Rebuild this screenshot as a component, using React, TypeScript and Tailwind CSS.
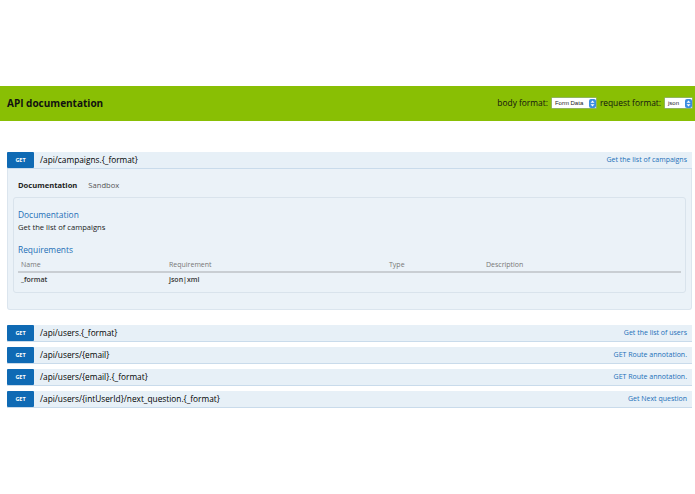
import React from "react";

const font = { fontFamily: '"Open Sans", "Noto Sans", sans-serif' };

function Stepper() {
  return (
    <span className="flex h-[9px] w-[7px] flex-col items-center justify-center rounded-[2px] bg-[#3b8de0]">
      <svg width="5" height="7" viewBox="0 0 5 7">
        <path d="M2.5 0.5 L4.5 2.8 H0.5 Z" fill="#fff" />
        <path d="M2.5 6.5 L4.5 4.2 H0.5 Z" fill="#fff" />
      </svg>
    </span>
  );
}

function Select({ label, width }: { label: string; width: string }) {
  return (
    <span className={`flex h-[10px] items-center justify-between bg-white pl-[3px] shadow-[0_0_0_0.5px_#9ab] ${width}`}>
      <span className="text-[6px] leading-none text-[#222]" style={{ fontFamily: '"Liberation Sans", Arial, sans-serif' }}>{label}</span>
      <Stepper />
    </span>
  );
}

function Get() {
  return (
    <span className="flex h-[16px] w-[27px] shrink-0 items-center justify-center rounded-[1px] bg-[#0f6ab4] text-[5.5px] font-bold text-white">
      GET
    </span>
  );
}

function Row({ path, desc }: { path: string; desc: string }) {
  return (
    <div className="flex h-[17px] items-start border-b border-[#c9dbeb] bg-[#e7f0f7] pr-[5px]">
      <Get />
      <span className="ml-[6px] flex-1 text-[8.3px] leading-[16px] text-[#000]">{path}</span>
      <span className="text-[7px] leading-[16px] text-[#1b6fb7]">{desc}</span>
    </div>
  );
}

export default function App() {
  return (
    <div className="min-h-[494px] w-full bg-white" style={font}>
      <div className="h-[86px]" />
      <header className="flex h-[35px] items-center justify-between bg-[#89bf04] pl-[7px] pr-[3px]">
        <h1 className="text-[10px] font-bold text-[#111]">API documentation</h1>
        <div className="flex items-center gap-[4px] text-[8.4px] text-[#111]">
          <span>body format:</span>
          <Select label="Form Data" width="w-[44px]" />
          <span>request format:</span>
          <Select label="json" width="w-[27px]" />
        </div>
      </header>
      <main className="pl-[7px] pr-[3px] pt-[31px]">
        <div>
          <Row path="/api/campaigns.{_format}" desc="Get the list of campaigns" />
          <div className="rounded-b-[3px] border border-t-0 border-[#dbe5ee] bg-[#ebf2f8] px-[5px] pb-[16px]">
            <div className="flex items-center gap-[11px] pl-[5px] pt-[11px] pb-[7px] text-[7.6px] leading-[10px]">
              <span className="font-bold text-[#222]">Documentation</span>
              <span className="text-[#555]">Sandbox</span>
            </div>
            <div className="rounded-[3px] border border-[#d9e3ec] bg-[#ebf2f8] px-[4px] pt-[10px] pb-[5px]">
              <h2 className="text-[8.4px] leading-[13px] text-[#1b6fb7]">Documentation</h2>
              <p className="text-[7.6px] leading-[12px] text-[#222]">Get the list of campaigns</p>
              <h2 className="mt-[10px] text-[8.4px] leading-[13px] text-[#1b6fb7]">Requirements</h2>
              <table className="w-full text-left text-[7px] leading-[10px]">
                <thead>
                  <tr className="border-b-2 border-[#c9ced3] text-[#777]">
                    <th className="w-[151px] pb-[1px] pl-[3px] pt-[4px] font-normal">Name</th>
                    <th className="w-[220px] pb-[1px] pt-[4px] font-normal">Requirement</th>
                    <th className="w-[97px] pb-[1px] pt-[4px] font-normal">Type</th>
                    <th className="pb-[1px] pt-[4px] font-normal">Description</th>
                  </tr>
                </thead>
                <tbody>
                  <tr className="text-[#333]">
                    <td className="pb-[2px] pl-[3px] pt-[2px] font-semibold">_format</td>
                    <td className="pb-[2px] pt-[2px] font-semibold">json|xml</td>
                    <td />
                    <td />
                  </tr>
                </tbody>
              </table>
            </div>
          </div>
        </div>
        <div className="mt-[15px] flex flex-col gap-[5px]">
          <Row path="/api/users.{_format}" desc="Get the list of users" />
          <Row path="/api/users/{email}" desc="GET Route annotation." />
          <Row path="/api/users/{email}.{_format}" desc="GET Route annotation." />
          <Row path="/api/users/{intUserId}/next_question.{_format}" desc="Get Next question" />
        </div>
      </main>
    </div>
  );
}
